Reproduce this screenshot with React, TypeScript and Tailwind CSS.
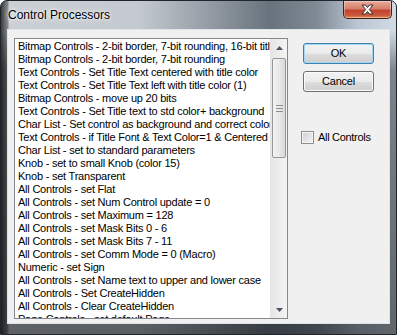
const rows = [
  "Bitmap Controls - 2-bit border, 7-bit rounding, 16-bit title",
  "Bitmap Controls - 2-bit border, 7-bit rounding",
  "Text Controls - Set Title Text centered with title color",
  "Text Controls - Set Title Text left with title color (1)",
  "Bitmap Controls - move up 20 bits",
  "Text Controls - Set Title text to std color+ background",
  "Char List - Set control as background and correct color",
  "Text Controls - if Title Font & Text Color=1 & Centered",
  "Char List - set to standard parameters",
  "Knob - set to small Knob (color 15)",
  "Knob - set Transparent",
  "All Controls - set Flat",
  "All Controls - set Num Control update = 0",
  "All Controls - set Maximum = 128",
  "All Controls - set Mask Bits 0 - 6",
  "All Controls - set Mask Bits 7 - 11",
  "All Controls - set Comm Mode = 0 (Macro)",
  "Numeric - set Sign",
  "All Controls - set Name text to upper and lower case",
  "All Controls - Set CreateHidden",
  "All Controls - Clear CreateHidden",
  "Page Controls - set default Page",
];

const btnClass =
  "flex h-[21px] w-[71px] items-center justify-center rounded-[3px] border bg-[linear-gradient(180deg,#f2f2f2_0%,#ebebeb_50%,#dddddd_51%,#cfcfcf_100%)] text-[11px] tracking-[-0.2px] text-black";

function ScrollArrow({ up }: { up?: boolean }) {
  return (
    <div className="flex h-[17px] w-full shrink-0 items-center justify-center">
      <svg width="7" height="4" viewBox="0 0 7 4">
        <path
          d={up ? "M0 4 L3.5 0 L7 4 Z" : "M0 0 L3.5 4 L7 0 Z"}
          fill="#4a5564"
        />
      </svg>
    </div>
  );
}

export default function App() {
  return (
    <div className="h-[335px] w-[397px] overflow-hidden bg-white font-['Liberation_Sans',Arial,sans-serif]">
      <div className="flex h-full w-full flex-col rounded-t-[7px] border border-[#1f252b] bg-[linear-gradient(90deg,rgba(10,12,14,0.75)_0px,rgba(10,12,14,0.35)_7px,rgba(0,0,0,0)_8px),linear-gradient(180deg,rgba(0,0,0,0)_0px,rgba(0,0,0,0)_30px,rgba(20,24,28,0.45)_70px,rgba(20,24,28,0.6)_100%),linear-gradient(90deg,#cbd0d5_0%,#c3c9cf_35%,#8d969f_55%,#69737d_68%,#7f8a95_80%,#b9c5d1_90%,#d2dbe4_100%)]">
        {/* title bar */}
        <div className="flex h-[28px] shrink-0 items-start justify-between">
          <span className="ml-[7px] mt-[7px] text-[12px] leading-[14px] text-black [text-shadow:0_0_6px_#ffffff,0_0_3px_#ffffff]">
            Control Processors
          </span>
          <div className="mr-[4px] flex h-[18px] w-[49px] items-center justify-center rounded-b-[5px] border border-t-0 border-[#4b1d14] bg-[linear-gradient(180deg,#e9a99a_0%,#d8806c_45%,#c0432b_55%,#c95a3c_85%,#e0925f_100%)] shadow-[inset_0_0_0_1px_rgba(255,255,255,0.35)]">
            <svg width="13" height="11" viewBox="0 0 13 11">
              <path
                d="M1 1 H4.5 L6.5 3.5 L8.5 1 H12 L8.3 5.5 L12 10 H8.5 L6.5 7.5 L4.5 10 H1 L4.7 5.5 Z"
                fill="#ffffff"
                stroke="#3a2a28"
                strokeWidth="1"
                strokeLinejoin="round"
              />
            </svg>
          </div>
        </div>

        {/* client area */}
        <div className="mx-[6px] mb-[10px] flex flex-1 border border-[#dfe4ea] bg-[#f0f0f0] pl-[6px] pt-[8px]">
          {/* list box */}
          <div className="flex h-[281px] w-[274px] shrink-0 border border-[#828790] bg-white">
            <div className="flex-1 overflow-hidden pl-[3px] pt-[1px]">
              {rows.map((r) => (
                <div
                  key={r}
                  className="h-[13px] whitespace-nowrap text-[11px] leading-[13px] tracking-[-0.22px] text-black"
                >
                  {r}
                </div>
              ))}
            </div>
            <div className="flex w-[17px] shrink-0 flex-col border-l border-[#e6e6e6] bg-[linear-gradient(90deg,#e6e6e6,#f4f4f4)]">
              <ScrollArrow up />
              <div className="mx-[1px] mt-[2px] flex h-[100px] flex-col items-center justify-center gap-[2px] rounded-[2px] border border-[#979797] bg-[linear-gradient(90deg,#f3f3f3_0%,#e8e8e8_50%,#d9d9d9_100%)]">
                <div className="h-px w-[7px] bg-[#8e8e8e]" />
                <div className="h-px w-[7px] bg-[#8e8e8e]" />
                <div className="h-px w-[7px] bg-[#8e8e8e]" />
              </div>
              <div className="flex-1" />
              <ScrollArrow />
            </div>
          </div>

          {/* buttons */}
          <div className="ml-[13px] flex flex-col">
            <div className={`${btnClass} ml-[2px] mt-[5px] border-[#3c7fb1] shadow-[inset_0_0_0_1px_#a7d8f2]`}>
              OK
            </div>
            <div className={`${btnClass} ml-[2px] mt-[7px] border-[#707070] shadow-[inset_0_0_0_1px_#fbfbfb]`}>
              Cancel
            </div>
            <label className="mt-[39px] flex h-[13px] items-center gap-[4px]">
              <span className="h-[13px] w-[13px] border border-[#8e8f8f] bg-[linear-gradient(135deg,#cbcfd5,#f6f6f6)] shadow-[inset_0_0_0_1px_#f4f4f4]" />
              <span className="text-[11px] leading-[13px] tracking-[-0.3px] text-black">
                All Controls
              </span>
            </label>
          </div>
        </div>
      </div>
    </div>
  );
}
